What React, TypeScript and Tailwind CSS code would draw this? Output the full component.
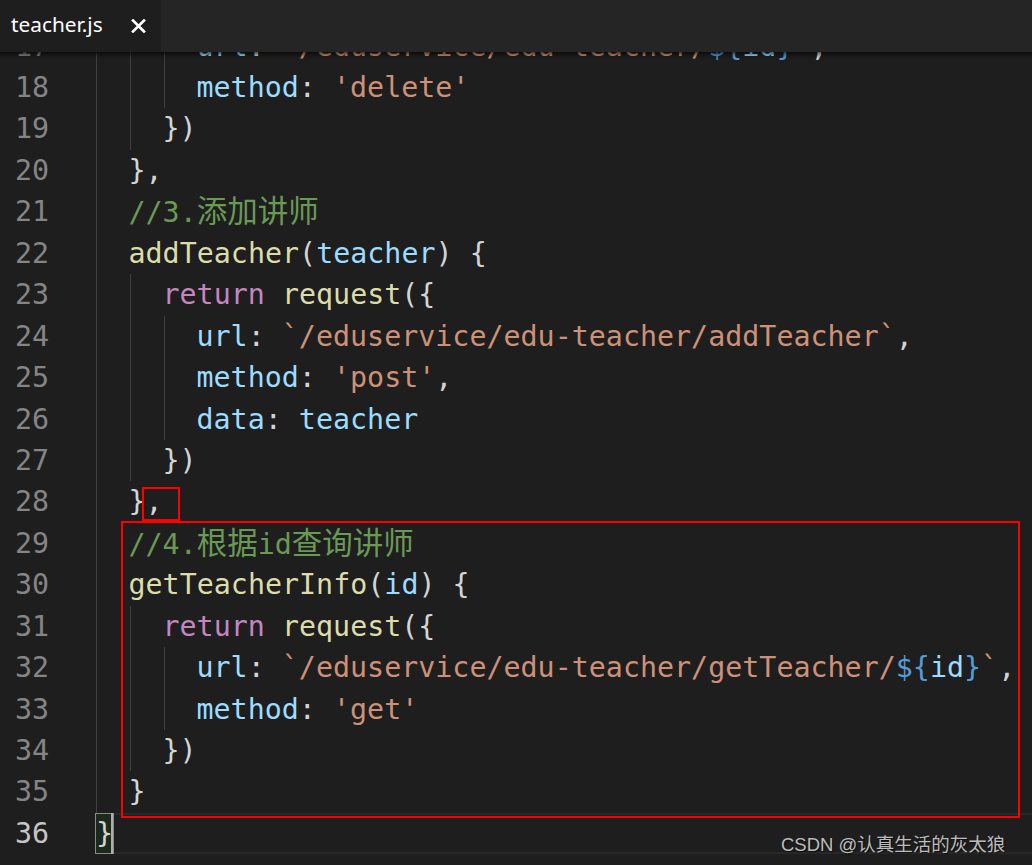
import React from "react";

type Tok = [string, string];

const C: Record<string, string> = {
  p: "text-[#d4d4d4]",
  k: "text-[#c586c0]",
  f: "text-[#dcdcaa]",
  v: "text-[#9cdcfe]",
  s: "text-[#ce9178]",
  c: "text-[#6a9955]",
  t: "text-[#569cd6]",
  z: "text-[#6a9955] text-[30.5px]",
};

const lines: { n: number; indent: number; toks: Tok[] }[] = [
  { n: 17, indent: 3, toks: [["v", "url"], ["p", ": "], ["s", "`/eduservice/edu-teacher/"], ["t", "${"], ["v", "id"], ["t", "}"], ["s", "`"], ["p", ","]] },
  { n: 18, indent: 3, toks: [["v", "method"], ["p", ": "], ["s", "'delete'"]] },
  { n: 19, indent: 2, toks: [["p", "})"]] },
  { n: 20, indent: 1, toks: [["p", "},"]] },
  { n: 21, indent: 1, toks: [["c", "//3."], ["z", "添加讲师"]] },
  { n: 22, indent: 1, toks: [["f", "addTeacher"], ["p", "("], ["v", "teacher"], ["p", ") {"]] },
  { n: 23, indent: 2, toks: [["k", "return"], ["p", " "], ["f", "request"], ["p", "({"]] },
  { n: 24, indent: 3, toks: [["v", "url"], ["p", ": "], ["s", "`/eduservice/edu-teacher/addTeacher`"], ["p", ","]] },
  { n: 25, indent: 3, toks: [["v", "method"], ["p", ": "], ["s", "'post'"], ["p", ","]] },
  { n: 26, indent: 3, toks: [["v", "data"], ["p", ": "], ["v", "teacher"]] },
  { n: 27, indent: 2, toks: [["p", "})"]] },
  { n: 28, indent: 1, toks: [["p", "},"]] },
  { n: 29, indent: 1, toks: [["c", "//4."], ["z", "根据"], ["c", "id"], ["z", "查询讲师"]] },
  { n: 30, indent: 1, toks: [["f", "getTeacherInfo"], ["p", "("], ["v", "id"], ["p", ") {"]] },
  { n: 31, indent: 2, toks: [["k", "return"], ["p", " "], ["f", "request"], ["p", "({"]] },
  { n: 32, indent: 3, toks: [["v", "url"], ["p", ": "], ["s", "`/eduservice/edu-teacher/getTeacher/"], ["t", "${"], ["v", "id"], ["t", "}"], ["s", "`"], ["p", ","]] },
  { n: 33, indent: 3, toks: [["v", "method"], ["p", ": "], ["s", "'get'"]] },
  { n: 34, indent: 2, toks: [["p", "})"]] },
  { n: 35, indent: 1, toks: [["p", "}"]] },
];

function Line({ n, indent, toks }: { n: number; indent: number; toks: Tok[] }) {
  return (
    <div className="flex h-[41.44px] leading-[41.44px]">
      <div className="w-[96px] shrink-0 pr-[47px] text-right text-[#858585]">{n}</div>
      <div className="flex h-full flex-1">
        {Array.from({ length: indent }).map((_, i) => (
          <span key={i} className="h-full w-[34px] shrink-0 border-l border-[#404040]" />
        ))}
        <span className="-ml-[1.5px] whitespace-pre">
          {toks.map(([k, t], i) => (
            <span key={i} className={C[k]}>
              {t}
            </span>
          ))}
        </span>
      </div>
    </div>
  );
}

export default function App() {
  return (
    <div className="relative flex h-[865px] w-[1032px] flex-col overflow-hidden bg-[#1e1e1e]">
      {/* Tab bar */}
      <div className="relative z-10 flex h-[52px] shrink-0 bg-[#252526]">
        <div className="flex w-[161px] items-center bg-[#1e1e1e] pl-[11px] text-[20.8px] text-white [font-family:'Noto_Sans','Open_Sans',sans-serif]">
          <span className="pb-[2px]">teacher.js</span>
          <svg className="ml-[28px]" width="15" height="14" viewBox="0 0 15 14">
            <path d="M2 1.5 L13 12.5 M13 1.5 L2 12.5" stroke="#ffffff" strokeWidth="2.6" strokeLinecap="square" />
          </svg>
        </div>
      </div>

      {/* Editor */}
      <div className="relative flex-1 overflow-hidden text-[28.33px] [font-family:'DejaVu_Sans_Mono','Noto_Sans_CJK_SC',monospace]">
        <div className="mt-[-26.4px]">
          {lines.map((l) => (
            <Line key={l.n} {...l} />
          ))}
          {/* line 36: current line */}
          <div className="flex h-[41.44px] leading-[41.44px]">
            <div className="w-[96px] shrink-0 pr-[47px] text-right text-[#c6c6c6]">36</div>
            <div className="flex h-full flex-1 items-stretch border-y-2 border-[#282828]">
              <span className="-my-[2px] -ml-[1px] flex w-[19px] items-center border border-[#8a8a8a] bg-[#1b2a1b] leading-[37px] text-[#d4d4d4]">
                {"}"}
              </span>
              <span className="-my-[2px] -ml-[3px] w-[2px] bg-[#aeafad]" />
            </div>
          </div>
        </div>
        <div className="absolute inset-x-0 top-0 h-[8px] shadow-[inset_0_7px_6px_-6px_#000000]" />
      </div>

      {/* annotations */}
      <div className="absolute left-[142px] top-[487px] h-[34px] w-[38px] border-2 border-[#ff0000]" />
      <div className="absolute left-[121px] top-[521px] h-[297px] w-[899px] border-2 border-[#ff0000]" />

      {/* watermark */}
      <div className="absolute left-[781px] top-[831px] text-[18.5px] text-[#bdbdbd] [font-family:'Liberation_Sans','Noto_Sans_CJK_SC',sans-serif] [text-shadow:1px_1px_1px_rgba(0,0,0,0.6)]">
        CSDN @认真生活的灰太狼
      </div>
    </div>
  );
}
